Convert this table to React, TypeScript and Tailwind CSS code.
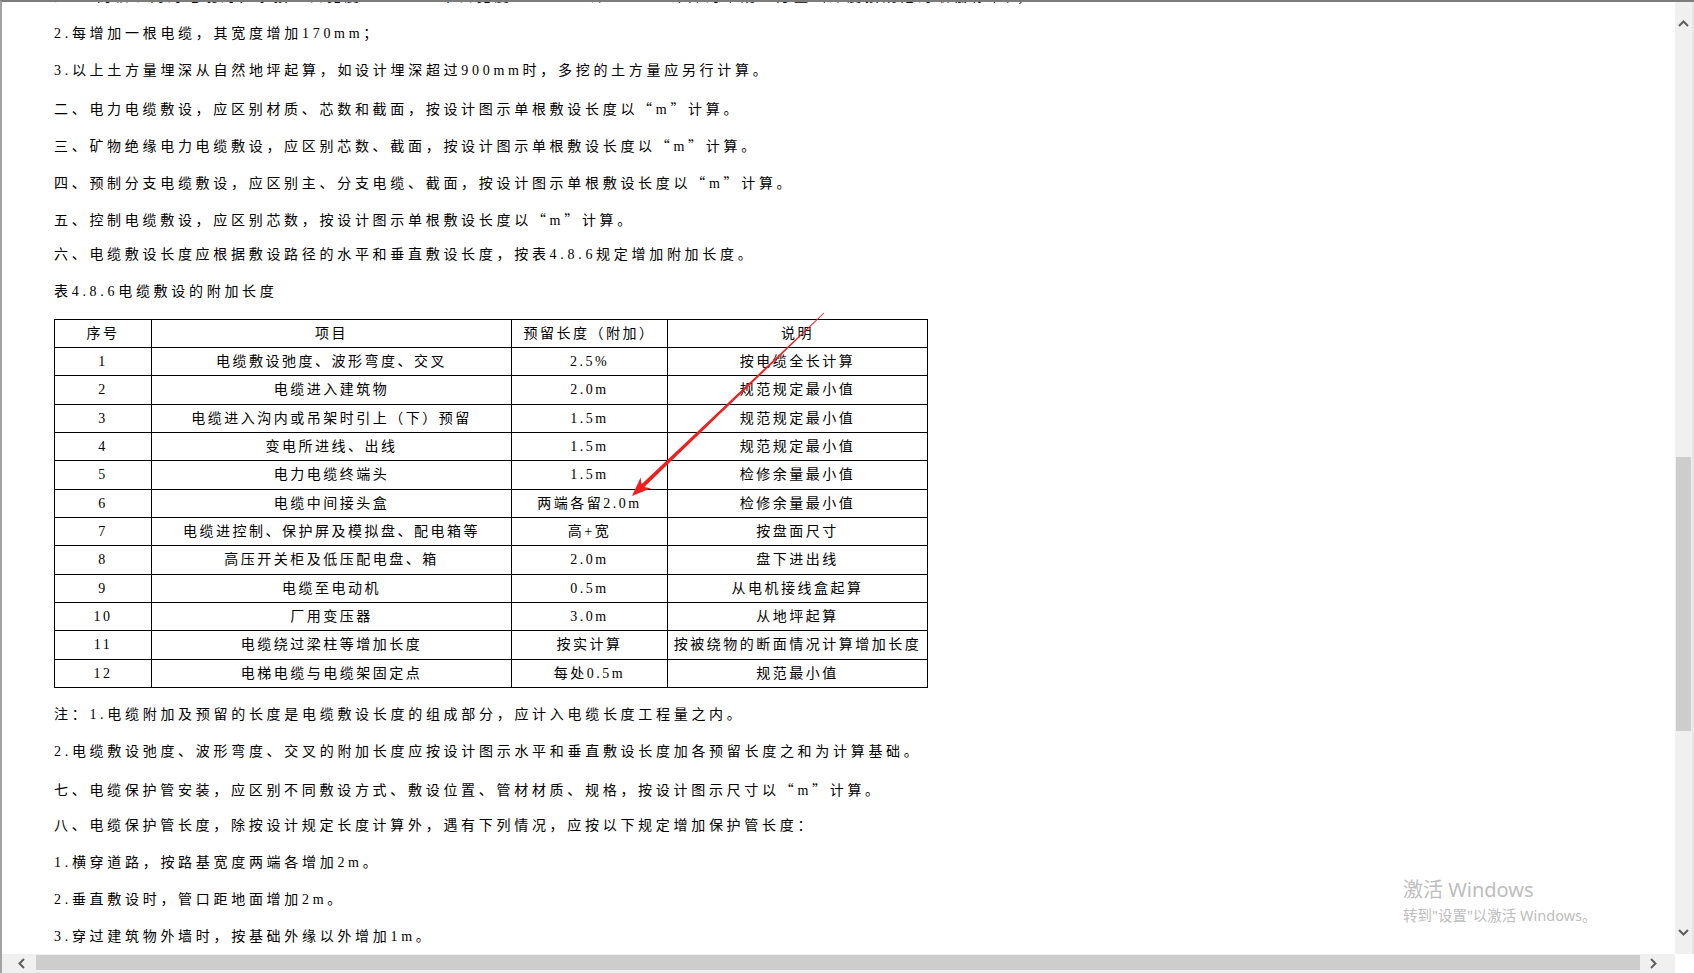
import React from "react";

const topLines = [
  "注    1.两根以内的电缆沟，系按上口宽度600mm、下口宽度400mm、深900mm计算的常规土方量（深度按规范的最低标准）；",
  "2.每增加一根电缆，其宽度增加170mm；",
  "3.以上土方量埋深从自然地坪起算，如设计埋深超过900mm时，多挖的土方量应另行计算。",
  "二、电力电缆敷设，应区别材质、芯数和截面，按设计图示单根敷设长度以“m”计算。",
  "三、矿物绝缘电力电缆敷设，应区别芯数、截面，按设计图示单根敷设长度以“m”计算。",
  "四、预制分支电缆敷设，应区别主、分支电缆、截面，按设计图示单根敷设长度以“m”计算。",
  "五、控制电缆敷设，应区别芯数，按设计图示单根敷设长度以“m”计算。",
  "六、电缆敷设长度应根据敷设路径的水平和垂直敷设长度，按表4.8.6规定增加附加长度。",
  "表4.8.6电缆敷设的附加长度",
];

const bottomLines = [
  "注：1.电缆附加及预留的长度是电缆敷设长度的组成部分，应计入电缆长度工程量之内。",
  "2.电缆敷设弛度、波形弯度、交叉的附加长度应按设计图示水平和垂直敷设长度加各预留长度之和为计算基础。",
  "七、电缆保护管安装，应区别不同敷设方式、敷设位置、管材材质、规格，按设计图示尺寸以“m”计算。",
  "八、电缆保护管长度，除按设计规定长度计算外，遇有下列情况，应按以下规定增加保护管长度：",
  "1.横穿道路，按路基宽度两端各增加2m。",
  "2.垂直敷设时，管口距地面增加2m。",
  "3.穿过建筑物外墙时，按基础外缘以外增加1m。",
];

const rows: [string, string, string, string][] = [
  ["1", "电缆敷设弛度、波形弯度、交叉", "2.5%", "按电缆全长计算"],
  ["2", "电缆进入建筑物", "2.0m", "规范规定最小值"],
  ["3", "电缆进入沟内或吊架时引上（下）预留", "1.5m", "规范规定最小值"],
  ["4", "变电所进线、出线", "1.5m", "规范规定最小值"],
  ["5", "电力电缆终端头", "1.5m", "检修余量最小值"],
  ["6", "电缆中间接头盒", "两端各留2.0m", "检修余量最小值"],
  ["7", "电缆进控制、保护屏及模拟盘、配电箱等", "高+宽", "按盘面尺寸"],
  ["8", "高压开关柜及低压配电盘、箱", "2.0m", "盘下进出线"],
  ["9", "电缆至电动机", "0.5m", "从电机接线盒起算"],
  ["10", "厂用变压器", "3.0m", "从地坪起算"],
  ["11", "电缆绕过梁柱等增加长度", "按实计算", "按被绕物的断面情况计算增加长度"],
  ["12", "电梯电缆与电缆架固定点", "每处0.5m", "规范最小值"],
];

// quotes come from the CJK font so they sit full width like in the doc
const renderText = (s: string) =>
  s.split(/([“”])/).map((part, i) =>
    part === "“" || part === "”" ? (
      <span key={i} className="font-['Noto_Sans_CJK_SC',sans-serif]">
        {part}
      </span>
    ) : (
      <React.Fragment key={i}>{part}</React.Fragment>
    )
  );

const Line: React.FC<{ text: string }> = ({ text }) => (
  <p className="h-[36.9px] leading-[36.9px] whitespace-nowrap">{renderText(text)}</p>
);

const Chevron: React.FC<{ dir: "up" | "down" | "left" | "right" }> = ({ dir }) => {
  const pts = {
    up: "1,7 5.5,2.5 10,7",
    down: "1,3 5.5,7.5 10,3",
    left: "7,1 2.5,5.5 7,10",
    right: "3,1 7.5,5.5 3,10",
  }[dir];
  return (
    <svg width="11" height="11" viewBox="0 0 11 11">
      <polyline points={pts} fill="none" stroke="#5f5f5f" strokeWidth="2" />
    </svg>
  );
};

export default function App() {
  const cell = "border border-black p-0 text-center whitespace-nowrap";
  return (
    <div className="relative w-[1694px] h-[973px] overflow-hidden bg-white">
      <div className="w-full h-full flex flex-col border-t-2 border-t-[#7c7c7c] border-l-2 border-l-[#a3a3a3]">
        <div className="flex flex-1 min-h-0">
          {/* Document page */}
          <div className="flex-1 overflow-hidden pl-[52px] text-black text-[14px] tracking-[3.7px] font-['Liberation_Serif','Noto_Sans_CJK_SC',serif]">
            <div className="-mt-[22.85px]">
              {topLines.map((t, i) => (
                <Line key={i} text={t} />
              ))}

              <table className="mt-[7.5px] border-collapse tracking-[2.5px]">
                <colgroup>
                  <col className="w-[97px]" />
                  <col className="w-[360px]" />
                  <col className="w-[156px]" />
                  <col className="w-[260px]" />
                </colgroup>
                <tbody>
                  <tr className="h-[28.33px]">
                    <td className={cell}>序号</td>
                    <td className={cell}>项目</td>
                    <td className={cell}>预留长度（附加）</td>
                    <td className={cell}>说明</td>
                  </tr>
                  {rows.map((r) => (
                    <tr key={r[0]} className="h-[28.33px]">
                      <td className={cell}>{r[0]}</td>
                      <td className={cell}>{r[1]}</td>
                      <td className={cell}>{r[2]}</td>
                      <td className={cell}>{r[3]}</td>
                    </tr>
                  ))}
                </tbody>
              </table>

              <div className="mt-[9.5px]">
                {bottomLines.map((t, i) => (
                  <Line key={i} text={t} />
                ))}
              </div>
            </div>
          </div>

          {/* Vertical scrollbar */}
          <div className="w-[19px] bg-[#f0f0f0] flex flex-col border-r-2 border-r-[#e6e6e6]">
            <div className="h-[44px] flex items-center justify-center">
              <Chevron dir="up" />
            </div>
            <div className="flex-1 relative">
              <div className="mt-[411px] ml-[1px] w-[15px] h-[274px] bg-[#cdcdcd]" />
            </div>
            <div className="h-[44px] flex items-center justify-center">
              <Chevron dir="down" />
            </div>
          </div>
        </div>

        {/* Horizontal scrollbar */}
        <div className="h-[19px] flex">
          <div className="w-[34px] bg-[#f0f0f0] flex items-center pl-[15px]">
            <Chevron dir="left" />
          </div>
          <div className="w-[1604px] bg-[#f0f0f0] pt-[1px]">
            <div className="h-[15px] bg-[#cdcdcd]" />
          </div>
          <div className="w-[35px] bg-[#f0f0f0] flex items-center pl-[8px]">
            <Chevron dir="right" />
          </div>
          <div className="flex-1 bg-white" />
        </div>
      </div>

      {/* Red annotation arrow */}
      <svg
        className="absolute left-0 top-0 pointer-events-none"
        width="1694"
        height="973"
        viewBox="0 0 1694 973"
      >
        <polygon
          points="824.3,313.3 644.3,487.1 651.0,488.3 632,496 640.6,477.5 641.5,484.2 823.7,312.7"
          fill="#f01e1e"
        />
      </svg>

      {/* Windows activation watermark */}
      <div className="absolute left-[1403px] top-[878px] text-[#bdbdbd] font-['Noto_Sans','Noto_Sans_CJK_SC',sans-serif] pointer-events-none">
        <div className="text-[20px] leading-[24px]">激活 Windows</div>
        <div className="mt-[3px] text-[14.5px] leading-[20px]">转到"设置"以激活 Windows。</div>
      </div>
    </div>
  );
}
